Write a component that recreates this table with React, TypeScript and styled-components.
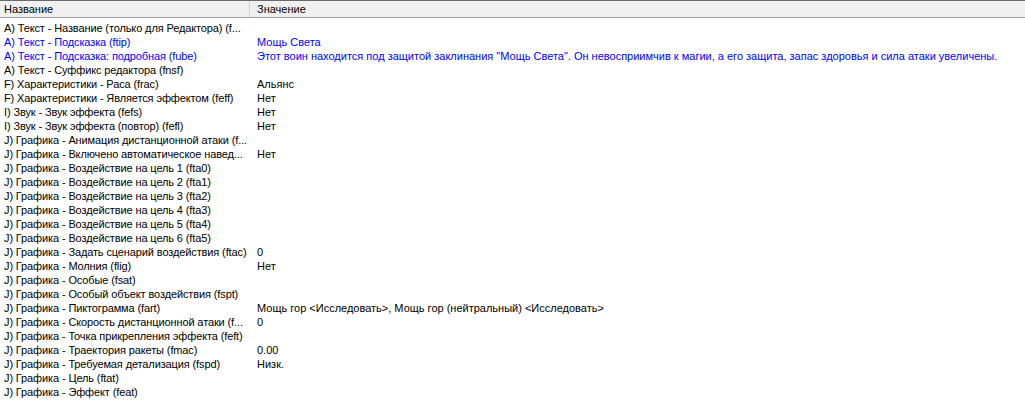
import React from "react";
import styled, { createGlobalStyle } from "styled-components";

const Global = createGlobalStyle`
  html, body { margin: 0; padding: 0; background: #ffffff; }
  body { font-family: Tahoma, "Liberation Sans", Arial, sans-serif; font-size: 11px; }
`;

const List = styled.div`
  width: 1025px;
  height: 402px;
  background: #ffffff;
  overflow: hidden;
`;

const Header = styled.div`
  display: grid;
  grid-template-columns: 249px 1fr;
  height: 16px;
  border-top: 1px solid #6a6a6a;
  border-bottom: 1px solid #a0a0a0;
  background: #f0f0f0;
`;

const HeaderCell = styled.div<{ $sep?: boolean }>`
  padding-left: ${(p) => (p.$sep ? "7px" : "4px")};
  line-height: 16px;
  color: #000;
  border-left: ${(p) => (p.$sep ? "1px solid #d5d5d5" : "none")};
  white-space: nowrap;
`;

const Body = styled.div`
  display: flex;
  flex-direction: column;
  padding-top: 3px;
`;

const Row = styled.div<{ $blue?: boolean }>`
  display: grid;
  grid-template-columns: 249px 1fr;
  height: 14px;
  line-height: 14px;
  color: ${(p) => (p.$blue ? "#0000ff" : "#000000")};
`;

const NameCell = styled.div`
  padding-left: 4px;
  white-space: nowrap;
  overflow: hidden;
  letter-spacing: -0.12px;
`;

const ValueCell = styled.div`
  padding-left: 8px;
  white-space: nowrap;
  overflow: hidden;
`;

const rows: { name: string; value?: string; blue?: boolean }[] = [
  { name: "A) Текст - Название (только для Редактора) (f..." },
  { name: "A) Текст - Подсказка (ftip)", value: "Мощь Света", blue: true },
  {
    name: "A) Текст - Подсказка: подробная (fube)",
    value:
      'Этот воин находится под защитой заклинания "Мощь Света". Он невосприимчив к магии, а его защита, запас здоровья и сила атаки увеличены.',
    blue: true,
  },
  { name: "A) Текст - Суффикс редактора (fnsf)" },
  { name: "F) Характеристики - Раса (frac)", value: "Альянс" },
  { name: "F) Характеристики - Является эффектом (feff)", value: "Нет" },
  { name: "I) Звук - Звук эффекта (fefs)", value: "Нет" },
  { name: "I) Звук - Звук эффекта (повтор) (fefl)", value: "Нет" },
  { name: "J) Графика - Анимация дистанционной атаки (f..." },
  { name: "J) Графика - Включено автоматическое навед...", value: "Нет" },
  { name: "J) Графика - Воздействие на цель 1 (fta0)" },
  { name: "J) Графика - Воздействие на цель 2 (fta1)" },
  { name: "J) Графика - Воздействие на цель 3 (fta2)" },
  { name: "J) Графика - Воздействие на цель 4 (fta3)" },
  { name: "J) Графика - Воздействие на цель 5 (fta4)" },
  { name: "J) Графика - Воздействие на цель 6 (fta5)" },
  { name: "J) Графика - Задать сценарий воздействия (ftac)", value: "0" },
  { name: "J) Графика - Молния (flig)", value: "Нет" },
  { name: "J) Графика - Особые (fsat)" },
  { name: "J) Графика - Особый объект воздействия (fspt)" },
  {
    name: "J) Графика - Пиктограмма (fart)",
    value: "Мощь гор <Исследовать>, Мощь гор (нейтральный) <Исследовать>",
  },
  { name: "J) Графика - Скорость дистанционной атаки (f...", value: "0" },
  { name: "J) Графика - Точка прикрепления эффекта (feft)" },
  { name: "J) Графика - Траектория ракеты (fmac)", value: "0.00" },
  { name: "J) Графика - Требуемая детализация (fspd)", value: "Низк." },
  { name: "J) Графика - Цель (ftat)" },
  { name: "J) Графика - Эффект (feat)" },
];

export default function App() {
  return (
    <>
      <Global />
      <List>
        <Header>
          <HeaderCell>Название</HeaderCell>
          <HeaderCell $sep>Значение</HeaderCell>
        </Header>
        <Body>
          {rows.map((r, i) => (
            <Row key={i} $blue={r.blue}>
              <NameCell>{r.name}</NameCell>
              <ValueCell>{r.value ?? ""}</ValueCell>
            </Row>
          ))}
        </Body>
      </List>
    </>
  );
}
